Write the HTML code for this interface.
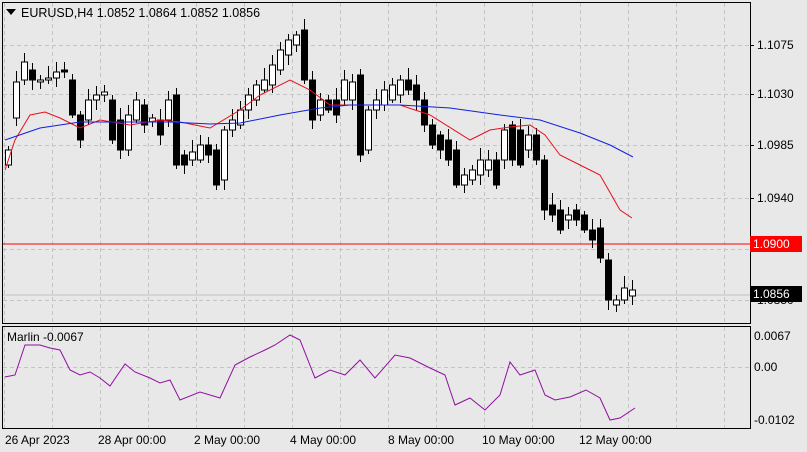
<!DOCTYPE html>
<html><head><meta charset="utf-8"><style>
body{margin:0;width:807px;height:452px;background:#e8e8e8;overflow:hidden;font-family:"Liberation Sans",sans-serif;}
svg{position:absolute;left:0;top:0}
text{font-family:"Liberation Sans",sans-serif;font-size:12px;fill:#000}
</style></head><body>
<svg id="s" width="807" height="452" viewBox="0 0 807 452">
<rect x="0" y="0" width="807" height="452" fill="#e8e8e8"/>
<g id="grid" stroke="#c4c4c4" stroke-dasharray="4,3" stroke-width="1"></g>
<line x1="3" y1="244" x2="750" y2="244" stroke="#ff0000" stroke-width="1"/>
<line x1="3" y1="295" x2="750" y2="295" stroke="#c0c0c0" stroke-width="1"/>
<g id="candles"></g>
<polyline fill="none" stroke="#e8101e" stroke-width="1" points="5,170 15,140 30,115 45,112 60,118 80,128 100,120 130,125 160,120 180,122 210,128 240,110 260,95 290,80 310,90 330,105 370,105 400,105 430,115 470,140 490,130 510,127 530,125 545,135 560,155 580,165 600,175 620,210 632,218"/>
<polyline fill="none" stroke="#1020e0" stroke-width="1" points="5,140 40,128 80,122 120,122 170,122 210,124 240,123 280,115 320,108 350,105 400,105 450,108 500,115 540,120 580,133 610,145 633,157"/>
<polyline fill="none" stroke="#9010a0" stroke-width="1" points="5,377 15,375 25,345 40,345 50,348 60,350 70,370 80,375 90,372 100,378 110,386 125,364 135,372 150,378 160,383 170,380 180,400 200,392 220,398 235,365 250,357 265,350 275,345 290,335 300,340 315,378 330,370 345,375 360,360 375,378 395,355 410,358 430,368 445,375 455,405 470,398 485,410 500,395 510,362 520,375 535,370 545,395 555,400 570,397 586,390 600,398 610,420 620,418 635,408"/>
<rect x="2.5" y="2.5" width="748" height="321" fill="none" stroke="#000"/>
<rect x="2.5" y="326.5" width="748" height="102" fill="none" stroke="#000"/>
<path d="M6 9 L16 9 L11 15 Z" fill="#000"/>
<text x="21" y="17" style="font-size:12.5px">EURUSD,H4  1.0852 1.0864 1.0852 1.0856</text>
<text x="7" y="341">Marlin -0.0067</text>
<g id="axis"></g>
<rect x="750" y="236" width="52" height="16" fill="#ff0000"/>
<text x="753" y="248" style="fill:#fff">1.0900</text>
<rect x="750" y="286" width="52" height="16" fill="#000"/>
<text x="753" y="298" style="fill:#fff">1.0856</text>
<text x="5" y="444">26 Apr 2023</text>
<text x="98" y="444">28 Apr 00:00</text>
<text x="194" y="444">2 May 00:00</text>
<text x="290" y="444">4 May 00:00</text>
<text x="388" y="444">8 May 00:00</text>
<text x="482" y="444">10 May 00:00</text>
<text x="579" y="444">12 May 00:00</text>
</svg>
<script>
var ns="http://www.w3.org/2000/svg",g=document.getElementById('grid'),c=document.getElementById('candles'),ax=document.getElementById('axis');
function el(p,t,a){var e=document.createElementNS(ns,t);for(var k in a)e.setAttribute(k,a[k]);p.appendChild(e);return e;}
for(var x=4;x<750;x+=48){el(g,'line',{x1:x+.5,y1:3,x2:x+.5,y2:323});el(g,'line',{x1:x+.5,y1:327,x2:x+.5,y2:428});}
[45,94,145,198,249,300].forEach(function(y){el(g,'line',{x1:3,y1:y+.5,x2:750,y2:y+.5});});
el(g,'line',{x1:3,y1:367.5,x2:750,y2:367.5});
[[45,'1.1075'],[94,'1.1030'],[145,'1.0985'],[198,'1.0940'],[300,'1.0850']].forEach(function(a){el(ax,'line',{x1:750,y1:a[0]+.5,x2:754,y2:a[0]+.5,stroke:'#000'});var t=el(ax,'text',{x:757,y:a[0]+4});t.textContent=a[1];});
[[340,'0.0067'],[371,'0.00'],[424,'-0.0102']].forEach(function(a){var t=el(ax,'text',{x:754,y:a[0]});t.textContent=a[1];});
var d=[[165,150],[118,82],[80,62],[70,80],[82,80],[80,78],[78,72],[70,72],[80,115],[115,140],[120,100],[100,95],[95,92],[100,140],[120,150],[150,115],[120,100],[105,125],[122,118],[120,135],[120,100],[95,165],[155,165],[160,152],[160,145],[145,155],[150,185],[180,130],[130,120],[125,110],[110,95],[100,85],[90,80],[85,65],[70,50],[55,40],[45,35],[30,80],[80,120],[115,100],[100,110],[100,115],[100,80],[100,82],[75,155],[150,110],[110,100],[105,90],[100,85],[95,80],[80,90],[85,100],[100,125],[125,145],[135,150],[140,160],[150,185],[185,175],[180,170],[175,160],[170,160],[160,185],[160,130],[125,160],[130,165],[150,135],[135,160],[160,210],[205,215],[210,230],[220,215],[210,220],[215,230],[230,240],[228,258],[260,300],[305,300],[300,288],[296,290]];
d.forEach(function(v,i){var x=8+i*8,o=v[0],cl=v[1],t=Math.min(o,cl),b=Math.max(o,cl),w=4+(i*7)%9,w2=3+(i*5)%8;
el(c,'line',{x1:x+.5,y1:t-w,x2:x+.5,y2:b+w2,stroke:'#000'});
el(c,'rect',{x:x-2.5,y:t,width:6,height:Math.max(b-t,2),fill:cl<o?'#fff':'#000',stroke:'#000'});});
</script>
</body></html>
